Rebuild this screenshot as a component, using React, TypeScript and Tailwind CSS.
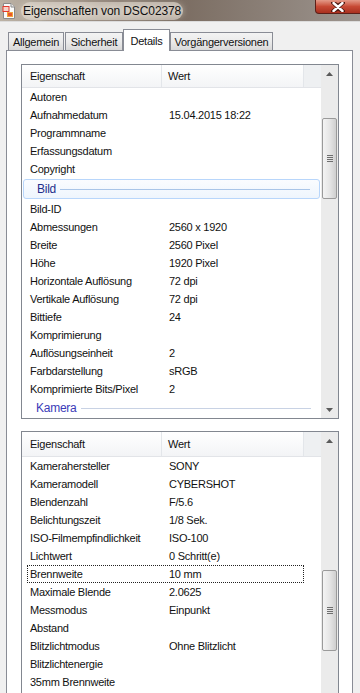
import React from "react";

type Row = { k: string; v?: string; group?: "active" | "plain"; focus?: boolean };

const topRows: Row[] = [
  { k: "Autoren" },
  { k: "Aufnahmedatum", v: "15.04.2015 18:22" },
  { k: "Programmname" },
  { k: "Erfassungsdatum" },
  { k: "Copyright" },
  { k: "Bild", group: "active" },
  { k: "Bild-ID" },
  { k: "Abmessungen", v: "2560 x 1920" },
  { k: "Breite", v: "2560 Pixel" },
  { k: "Höhe", v: "1920 Pixel" },
  { k: "Horizontale Auflösung", v: "72 dpi" },
  { k: "Vertikale Auflösung", v: "72 dpi" },
  { k: "Bittiefe", v: "24" },
  { k: "Komprimierung" },
  { k: "Auflösungseinheit", v: "2" },
  { k: "Farbdarstellung", v: "sRGB" },
  { k: "Komprimierte Bits/Pixel", v: "2" },
  { k: "Kamera", group: "plain" },
];

const bottomRows: Row[] = [
  { k: "Kamerahersteller", v: "SONY" },
  { k: "Kameramodell", v: "CYBERSHOT" },
  { k: "Blendenzahl", v: "F/5.6" },
  { k: "Belichtungszeit", v: "1/8 Sek." },
  { k: "ISO-Filmempfindlichkeit", v: "ISO-100" },
  { k: "Lichtwert", v: "0 Schritt(e)" },
  { k: "Brennweite", v: "10 mm", focus: true },
  { k: "Maximale Blende", v: "2.0625" },
  { k: "Messmodus", v: "Einpunkt" },
  { k: "Abstand" },
  { k: "Blitzlichtmodus", v: "Ohne Blitzlicht" },
  { k: "Blitzlichtenergie" },
  { k: "35mm Brennweite" },
];

const Arrow = ({ down }: { down?: boolean }) => (
  <svg width="7" height="4" viewBox="0 0 7 4">
    <path d={down ? "M0 0H7L3.5 4Z" : "M0 4H7L3.5 0Z"} fill="#5a5a5a" />
  </svg>
);

const Scrollbar = ({ thumbTop, thumbH }: { thumbTop: number; thumbH: number }) => (
  <div className="flex w-[17px] shrink-0 flex-col bg-[#ebebeb]">
    <div className="flex h-[17px] shrink-0 items-center justify-center">
      <Arrow />
    </div>
    <div className="relative flex-1">
      <div
        className="absolute left-[1px] flex w-[15px] flex-col items-center justify-center gap-[1px] rounded-[2px] border border-[#9a9a9a] bg-gradient-to-r from-[#f4f4f4] via-[#e6e6e6] to-[#cfcfcf]"
        style={{ top: thumbTop, height: thumbH }}
      >
        <div className="h-px w-[6px] bg-[#6e6e6e]" />
        <div className="h-px w-[6px] bg-[#6e6e6e]" />
        <div className="h-px w-[6px] bg-[#6e6e6e]" />
        <div className="h-px w-[6px] bg-[#6e6e6e]" />
      </div>
    </div>
    <div className="flex h-[17px] shrink-0 items-center justify-center">
      <Arrow down />
    </div>
  </div>
);

const ListRow = ({ row }: { row: Row }) => {
  if (row.group === "active") {
    return (
      <div className="h-[23px] px-[1px] py-[1px]">
        <div className="flex h-full items-center rounded-[3px] border border-[#b8d6fb] bg-gradient-to-b from-[#fafcff] to-[#eef5fd] pl-[13px] pr-[9px]">
          <span className="text-[12px] text-[#1f2f8c]">{row.k}</span>
          <div className="ml-[4px] h-px flex-1 bg-[#a9c5e8]" />
        </div>
      </div>
    );
  }
  if (row.group === "plain") {
    return (
      <div className="flex h-[23px] items-center pl-[14px] pr-[10px]">
        <span className="text-[12px] text-[#3b3bb8]">{row.k}</span>
        <div className="ml-[4px] h-px flex-1 bg-[#c8d2e4]" />
      </div>
    );
  }
  return (
    <div className="h-[18px] pl-[5px] pr-[17px]">
      <div
        className={
          row.focus
            ? "flex h-full items-center border border-dotted border-[#222]"
            : "flex h-full items-center border border-transparent"
        }
      >
        <span className="w-[140px] shrink-0 pl-[2px]">{row.k}</span>
        <span className="pl-[1px]">{row.v}</span>
      </div>
    </div>
  );
};

const ListBox = ({
  rows,
  height,
  headerH,
  thumbTop,
  thumbH,
}: {
  rows: Row[];
  height: string;
  headerH: string;
  thumbTop: number;
  thumbH: number;
}) => (
  <div className={`flex w-[318px] shrink-0 overflow-hidden border border-[#828790] bg-white ${height}`}>
    <div className="flex min-w-0 flex-1 flex-col overflow-hidden">
      <div className={`flex shrink-0 border-b border-[#e2e4e8] bg-gradient-to-b from-[#ffffff] to-[#f3f4f6] ${headerH}`}>
        <div className="flex w-[140px] shrink-0 items-center border-r border-[#e3e6ea] pl-[8px]">Eigenschaft</div>
        <div className="flex flex-1 items-center border-r border-[#e3e6ea] pl-[6px]">Wert</div>
        <div className="w-[17px] shrink-0 bg-[#eef0f2]" />
      </div>
      {rows.map((r) => (
        <ListRow key={r.k} row={r} />
      ))}
    </div>
    <Scrollbar thumbTop={thumbTop} thumbH={thumbH} />
  </div>
);

const FileIcon = () => (
  <svg width="14" height="16" viewBox="0 0 14 16">
    <path d="M1.5 0.5H9L12.5 4V15.5H1.5Z" fill="#fbfbfb" stroke="#8a8a8a" />
    <path d="M9 0.5V4H12.5" fill="#e8e8e8" stroke="#8a8a8a" />
    <rect x="0.5" y="3" width="7" height="6" fill="#e23a2e" />
    <rect x="1.5" y="4" width="5" height="4" fill="#f6d3c9" />
    <rect x="5" y="9" width="6" height="5" fill="#f2a43a" />
    <rect x="6" y="10" width="4" height="3" fill="#e9582a" />
  </svg>
);

// close-button cross: white bars with a dark rim
const CloseX = () => (
  <svg width="14" height="10" viewBox="0 0 14 10">
    <path d="M2 0.5L7 4L12 0.5M2 9.5L7 6L12 9.5M2 0.5L12 9.5M12 0.5L2 9.5" stroke="#4a1710" strokeWidth="4" strokeLinecap="round" fill="none" />
    <path d="M2.5 1L11.5 9M11.5 1L2.5 9" stroke="#ffffff" strokeWidth="2.4" strokeLinecap="round" fill="none" />
  </svg>
);

const Tab = ({ label, w, active }: { label: string; w: string; active?: boolean }) =>
  active ? (
    <div className={`relative z-10 -mb-px flex h-[22px] shrink-0 items-start justify-center border border-b-0 border-[#898c95] bg-white pt-[3px] ${w}`}>
      {label}
    </div>
  ) : (
    <div className={`flex h-[18px] shrink-0 items-center justify-center border border-b-0 border-[#898c95] bg-gradient-to-b from-[#f3f3f3] via-[#ebebeb] to-[#d9d9d9] pt-[1px] ${w}`}>
      {label}
    </div>
  );

export default function App() {
  return (
    <div className="relative flex h-[693px] w-[360px] flex-col overflow-hidden bg-[#f0f0f0] font-['Liberation_Sans',Arial,sans-serif] text-[11px] tracking-[-0.25px] text-[#111]">
      <div className="relative flex h-[21px] shrink-0 items-center bg-gradient-to-r from-[#bcb2a5] via-[#7b6d62] to-[#9c948e] pl-[2px]">
        <FileIcon />
        <span className="ml-[5px] rounded-full bg-[#e2dbd0]/60 px-[2px] text-[12px] tracking-[-0.1px] text-[#101010] [text-shadow:0_0_6px_#f4efe6,0_0_10px_#f4efe6]">
          Eigenschaften von DSC02378
        </span>
        <div className="absolute right-[-4px] top-0 flex h-[14px] w-[49px] items-center justify-center rounded-bl-[4px] border border-t-0 border-[#5c1f18] bg-gradient-to-b from-[#e39a89] via-[#c74a35] to-[#a9301f] pr-[4px]">
          <CloseX />
        </div>
      </div>
      <div className="h-px shrink-0 bg-[#dcdcdc]" />
      <div className="flex h-[28px] shrink-0 items-end pl-[8px]">
        <Tab label="Allgemein" w="w-[56px]" />
        <Tab label="Sicherheit" w="ml-[1px] w-[58px]" />
        <Tab label="Details" w="w-[47px]" active />
        <Tab label="Vorgängerversionen" w="w-[103px]" />
      </div>
      <div className="ml-[6px] flex w-[347px] flex-1 flex-col gap-[12px] border border-b-0 border-[#898c95] bg-white pl-[14px] pt-[13px]">
        <ListBox rows={topRows} height="h-[355px]" headerH="h-[23px]" thumbTop={36} thumbH={81} />
        <ListBox rows={bottomRows} height="h-[300px]" headerH="h-[25px]" thumbTop={121} thumbH={81} />
      </div>
    </div>
  );
}
